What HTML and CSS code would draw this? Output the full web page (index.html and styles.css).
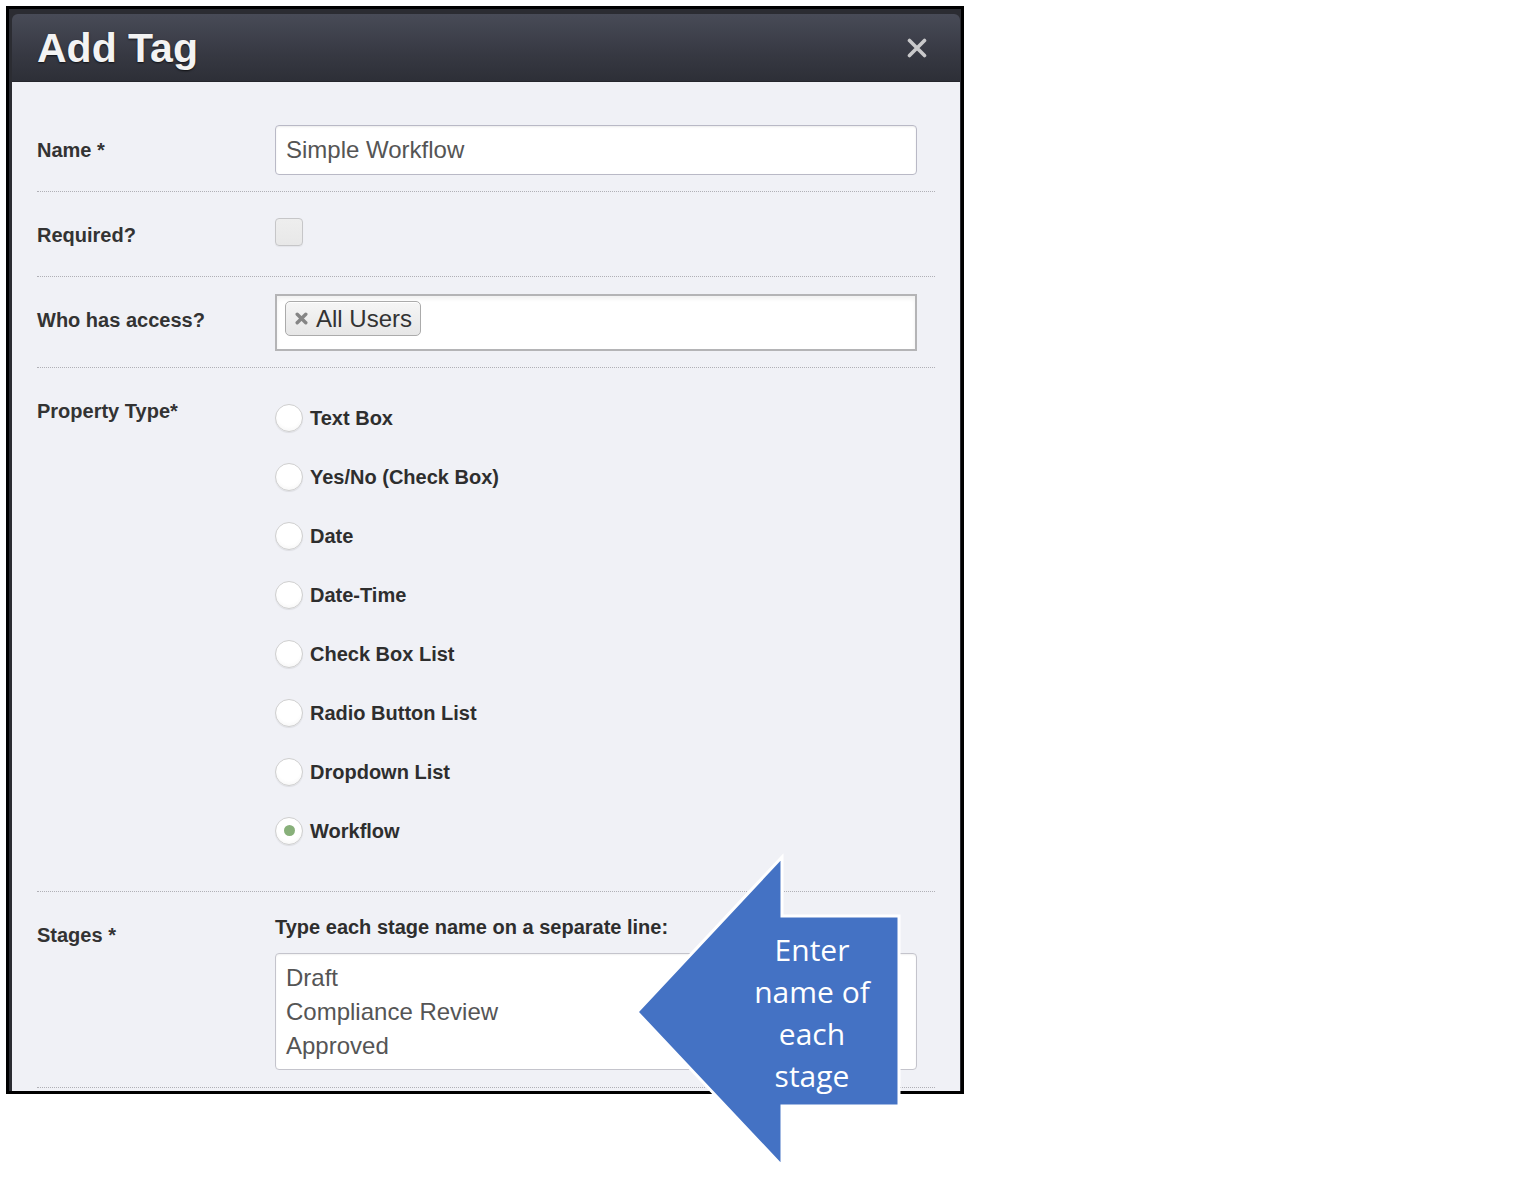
FILE: index.html
```html
<!DOCTYPE html>
<html lang="en">
<head>
<meta charset="utf-8">
<title>Add Tag</title>
<link rel="stylesheet" href="styles.css">
</head>
<body>
<div class="page">
  <div class="frame">
    <div class="dialog">
      <div class="header">
        <h1 class="title">Add Tag</h1>
        <span class="close" aria-label="Close">
          <svg width="20" height="20" viewBox="0 0 20 20"><path d="M2.5 2.5 L17.5 17.5 M17.5 2.5 L2.5 17.5" stroke="#c9c9cb" stroke-width="3.6" stroke-linecap="round" fill="none"/></svg>
        </span>
      </div>
      <div class="body">
        <div class="row row-name">
          <div class="label">Name *</div>
          <div class="field"><div class="input">Simple Workflow</div></div>
        </div>
        <div class="row row-required">
          <div class="label label-required">Required?</div>
          <div class="field"><span class="checkbox"></span></div>
        </div>
        <div class="row row-access">
          <div class="label label-access">Who has access?</div>
          <div class="field">
            <div class="tagbox">
              <span class="chip">
                <svg class="chip-x" width="13" height="13" viewBox="0 0 13 13"><path d="M2.2 2.2 L10.8 10.8 M10.8 2.2 L2.2 10.8" stroke="#858585" stroke-width="3.4" stroke-linecap="round" fill="none"/></svg>
                <span class="chip-text">All Users</span>
              </span>
            </div>
          </div>
        </div>
        <div class="row row-type">
          <div class="label label-top">Property Type*</div>
          <div class="field">
            <div class="radio-item"><span class="radio"></span><span class="radio-text">Text Box</span></div>
            <div class="radio-item"><span class="radio"></span><span class="radio-text">Yes/No (Check Box)</span></div>
            <div class="radio-item"><span class="radio"></span><span class="radio-text">Date</span></div>
            <div class="radio-item"><span class="radio"></span><span class="radio-text">Date-Time</span></div>
            <div class="radio-item"><span class="radio"></span><span class="radio-text">Check Box List</span></div>
            <div class="radio-item"><span class="radio"></span><span class="radio-text">Radio Button List</span></div>
            <div class="radio-item"><span class="radio"></span><span class="radio-text">Dropdown List</span></div>
            <div class="radio-item"><span class="radio radio-on"><span class="dot"></span></span><span class="radio-text">Workflow</span></div>
          </div>
        </div>
        <div class="row row-stages">
          <div class="label label-stages">Stages *</div>
          <div class="field">
            <div class="hint">Type each stage name on a separate line:</div>
            <div class="textarea">
              <div>Draft</div>
              <div>Compliance Review</div>
              <div>Approved</div>
            </div>
          </div>
        </div>
      </div>
    </div>
  </div>

  <svg class="callout" width="1522" height="1180" viewBox="0 0 1522 1180">
    <polygon points="637,1012 782,857 782,916 899,916 899,1106 782,1106 782,1166" fill="#4472c4" stroke="#ffffff" stroke-width="3" stroke-linejoin="miter"/>
    <text class="callout-text" x="812" y="961" text-anchor="middle">Enter</text>
    <text class="callout-text" x="812" y="1003" text-anchor="middle">name of</text>
    <text class="callout-text" x="812" y="1045" text-anchor="middle">each</text>
    <text class="callout-text" x="812" y="1087" text-anchor="middle">stage</text>
  </svg>
</div>
</body>
</html>
```

FILE: styles.css
```css
html, body {
  margin: 0;
  padding: 0;
  background: #ffffff;
}

.page {
  position: relative;
  width: 1522px;
  height: 1180px;
  overflow: hidden;
  font-family: "Liberation Sans", Arial, sans-serif;
}

.frame {
  margin: 6px 0 0 6px;
  width: 948px;
  border: 3px solid #000000;
  background: #2b2c32;
  padding: 5px 1px 0 3px;
  box-sizing: content-box;
}

.dialog {
  width: 948px;
  height: 1077px;
  display: flex;
  flex-direction: column;
  overflow: hidden;
  border-radius: 6px 6px 0 0;
}

.header {
  flex: none;
  height: 68px;
  display: flex;
  align-items: center;
  justify-content: space-between;
  padding: 0 33px 0 25px;
  background: linear-gradient(#484b57, #383a44 55%, #2d2f37);
  border-bottom: 1px solid #25262c;
  box-sizing: border-box;
}

.title {
  margin: 0;
  font-size: 41px;
  line-height: 40px;
  font-weight: bold;
  color: #f3f3f3;
  text-shadow: 0 1px 2px rgba(0, 0, 0, 0.7);
}

.close {
  display: flex;
  width: 20px;
  height: 20px;
  margin-top: 1px;
}

.body {
  flex: 1;
  background: #f0f1f6;
  padding: 27px 25px 0 25px;
  overflow: hidden;
}

.row {
  display: flex;
  align-items: center;
  border-bottom: 1px dotted #b0b0b6;
}

.label {
  flex: none;
  width: 238px;
  font-size: 20px;
  line-height: 24px;
  font-weight: bold;
  color: #333333;
}

.field {
  flex: none;
  width: 642px;
}

.row-name { padding: 16px 0; }
.row-required { padding: 26px 0 29px; align-items: flex-start; }
.label-required { margin-top: 5px; }
.row-access { padding: 17px 0 16px; align-items: flex-start; }
.label-access { margin-top: 14px; }
.row-type { padding: 20px 0 31px; align-items: flex-start; }
.row-stages { padding: 23px 0 17px; align-items: flex-start; }

.label-top { margin-top: 11px; }
.label-stages { margin-top: 8px; }

.input {
  height: 50px;
  box-sizing: border-box;
  background: #ffffff;
  border: 1px solid #b9b9c6;
  border-radius: 4px;
  box-shadow: inset 0 1px 2px rgba(0, 0, 0, 0.08);
  padding: 0 10px;
  display: flex;
  align-items: center;
  font-size: 24px;
  color: #555555;
}

.checkbox {
  display: block;
  width: 28px;
  height: 28px;
  box-sizing: border-box;
  border: 1px solid #c6c6c8;
  border-radius: 4px;
  background: linear-gradient(#eeeeee, #e8e8e8);
  box-shadow: 0 1px 1px rgba(0, 0, 0, 0.05);
}

.tagbox {
  height: 57px;
  box-sizing: border-box;
  background: #ffffff;
  border: 2px solid #b4b4b6;
  box-shadow: inset 0 3px 4px rgba(0, 0, 0, 0.06);
  padding: 5px 8px;
}

.chip {
  display: inline-flex;
  align-items: center;
  gap: 8px;
  height: 35px;
  box-sizing: border-box;
  padding: 0 8px 0 9px;
  border: 1px solid #ababab;
  border-radius: 5px;
  background: linear-gradient(#f6f6f6, #e6e6e6);
  box-shadow: inset 0 1px 0 #ffffff;
}

.chip-x {
  display: block;
  flex: none;
}

.chip-text {
  font-size: 24px;
  line-height: 28px;
  color: #333333;
}

.radio-item {
  display: flex;
  align-items: center;
  gap: 7px;
  height: 59px;
}

.radio {
  flex: none;
  width: 28px;
  height: 28px;
  box-sizing: border-box;
  border-radius: 50%;
  border: 1px solid #cfcfcf;
  background: radial-gradient(circle at 50% 40%, #ffffff 55%, #f0f0f0 100%);
  box-shadow: 0 1px 1px rgba(0, 0, 0, 0.08);
  display: flex;
  align-items: center;
  justify-content: center;
}

.radio .dot {
  width: 11px;
  height: 11px;
  border-radius: 50%;
  background: #88b07a;
}

.radio-text {
  font-size: 20px;
  line-height: 24px;
  font-weight: bold;
  color: #2e2e2e;
}

.hint {
  font-size: 20px;
  line-height: 24px;
  font-weight: bold;
  color: #2e2e2e;
  margin-bottom: 14px;
}

.textarea {
  height: 117px;
  box-sizing: border-box;
  background: #ffffff;
  border: 1px solid #c4c4cc;
  border-radius: 4px;
  box-shadow: inset 0 1px 2px rgba(0, 0, 0, 0.06);
  padding: 7px 10px;
  font-size: 24px;
  line-height: 34px;
  color: #555555;
}

.callout {
  position: absolute;
  left: 0;
  top: 0;
  pointer-events: none;
}

.callout-text {
  font-family: "Open Sans", "Liberation Sans", sans-serif;
  font-size: 30px;
  fill: #ffffff;
}
```
